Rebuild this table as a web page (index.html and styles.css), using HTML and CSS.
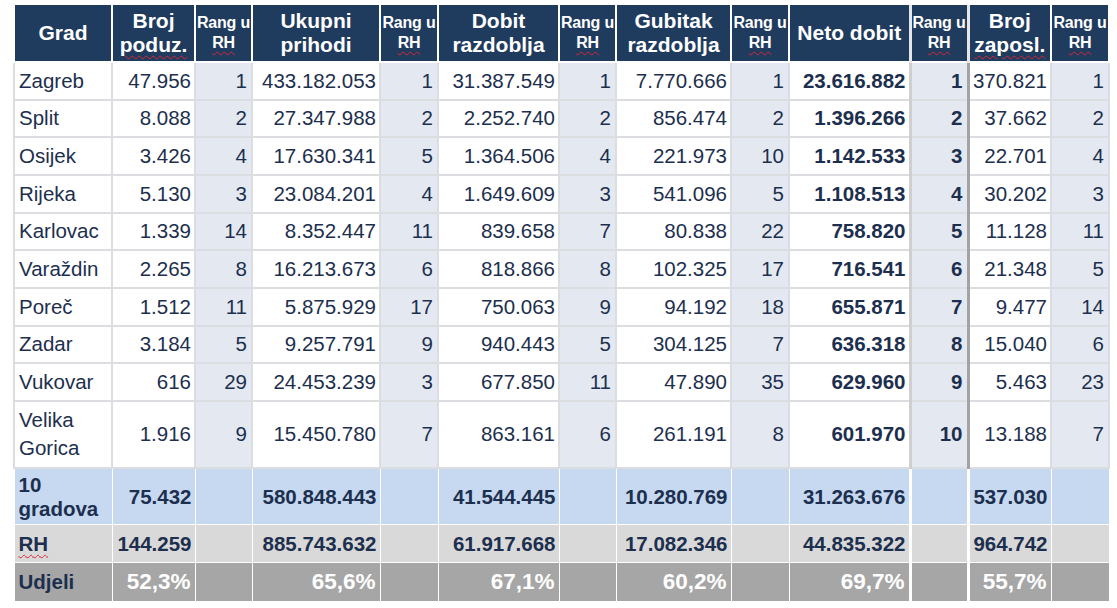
FILE: index.html
```html
<!DOCTYPE html>
<html lang="hr">
<head>
<meta charset="utf-8">
<title>Gradovi</title>
<link rel="stylesheet" href="styles.css">
</head>
<body>
<div class="wrap">
<table class="grid">
<colgroup>
<col style="width:98px"><col style="width:83px"><col style="width:57px">
<col style="width:128px"><col style="width:58px"><col style="width:121px">
<col style="width:57px"><col style="width:115px"><col style="width:58px">
<col style="width:121px"><col style="width:58px"><col style="width:83px">
<col style="width:58px">
</colgroup>
<thead>
<tr class="head">
<th>Grad</th>
<th>Broj<br><span class="sq">poduz.</span></th>
<th class="rh">Rang u<br><span class="sq">RH</span></th>
<th>Ukupni<br>prihodi</th>
<th class="rh">Rang u<br><span class="sq">RH</span></th>
<th>Dobit<br>razdoblja</th>
<th class="rh">Rang u<br><span class="sq">RH</span></th>
<th>Gubitak<br>razdoblja</th>
<th class="rh">Rang u<br><span class="sq">RH</span></th>
<th>Neto dobit</th>
<th class="rh sl">Rang u<br><span class="sq">RH</span></th>
<th class="sz">Broj<br><span class="sq">zaposl.</span></th>
<th class="rh">Rang u<br><span class="sq">RH</span></th>
</tr>
</thead>
<tbody>
<tr class="row"><td class="c">Zagreb</td><td class="n">47.956</td><td class="r">1</td><td class="n">433.182.053</td><td class="r">1</td><td class="n">31.387.549</td><td class="r">1</td><td class="n">7.770.666</td><td class="r">1</td><td class="n nb">23.616.882</td><td class="r b sl">1</td><td class="n sz">370.821</td><td class="r">1</td></tr>
<tr class="row"><td class="c">Split</td><td class="n">8.088</td><td class="r">2</td><td class="n">27.347.988</td><td class="r">2</td><td class="n">2.252.740</td><td class="r">2</td><td class="n">856.474</td><td class="r">2</td><td class="n nb">1.396.266</td><td class="r b sl">2</td><td class="n sz">37.662</td><td class="r">2</td></tr>
<tr class="row"><td class="c">Osijek</td><td class="n">3.426</td><td class="r">4</td><td class="n">17.630.341</td><td class="r">5</td><td class="n">1.364.506</td><td class="r">4</td><td class="n">221.973</td><td class="r">10</td><td class="n nb">1.142.533</td><td class="r b sl">3</td><td class="n sz">22.701</td><td class="r">4</td></tr>
<tr class="row"><td class="c">Rijeka</td><td class="n">5.130</td><td class="r">3</td><td class="n">23.084.201</td><td class="r">4</td><td class="n">1.649.609</td><td class="r">3</td><td class="n">541.096</td><td class="r">5</td><td class="n nb">1.108.513</td><td class="r b sl">4</td><td class="n sz">30.202</td><td class="r">3</td></tr>
<tr class="row"><td class="c">Karlovac</td><td class="n">1.339</td><td class="r">14</td><td class="n">8.352.447</td><td class="r">11</td><td class="n">839.658</td><td class="r">7</td><td class="n">80.838</td><td class="r">22</td><td class="n nb">758.820</td><td class="r b sl">5</td><td class="n sz">11.128</td><td class="r">11</td></tr>
<tr class="row"><td class="c">Varaždin</td><td class="n">2.265</td><td class="r">8</td><td class="n">16.213.673</td><td class="r">6</td><td class="n">818.866</td><td class="r">8</td><td class="n">102.325</td><td class="r">17</td><td class="n nb">716.541</td><td class="r b sl">6</td><td class="n sz">21.348</td><td class="r">5</td></tr>
<tr class="row"><td class="c">Poreč</td><td class="n">1.512</td><td class="r">11</td><td class="n">5.875.929</td><td class="r">17</td><td class="n">750.063</td><td class="r">9</td><td class="n">94.192</td><td class="r">18</td><td class="n nb">655.871</td><td class="r b sl">7</td><td class="n sz">9.477</td><td class="r">14</td></tr>
<tr class="row"><td class="c">Zadar</td><td class="n">3.184</td><td class="r">5</td><td class="n">9.257.791</td><td class="r">9</td><td class="n">940.443</td><td class="r">5</td><td class="n">304.125</td><td class="r">7</td><td class="n nb">636.318</td><td class="r b sl">8</td><td class="n sz">15.040</td><td class="r">6</td></tr>
<tr class="row"><td class="c">Vukovar</td><td class="n">616</td><td class="r">29</td><td class="n">24.453.239</td><td class="r">3</td><td class="n">677.850</td><td class="r">11</td><td class="n">47.890</td><td class="r">35</td><td class="n nb">629.960</td><td class="r b sl">9</td><td class="n sz">5.463</td><td class="r">23</td></tr>
<tr class="row tall"><td class="c two">Velika<br>Gorica</td><td class="n">1.916</td><td class="r">9</td><td class="n">15.450.780</td><td class="r">7</td><td class="n">863.161</td><td class="r">6</td><td class="n">261.191</td><td class="r">8</td><td class="n nb">601.970</td><td class="r b sl">10</td><td class="n sz">13.188</td><td class="r">7</td></tr>
</tbody>
<tfoot>
<tr class="sum"><td class="c lbl">10<br>gradova</td><td class="n">75.432</td><td></td><td class="n">580.848.443</td><td></td><td class="n">41.544.445</td><td></td><td class="n">10.280.769</td><td></td><td class="n">31.263.676</td><td class="sl"></td><td class="n sz">537.030</td><td></td></tr>
<tr class="hr"><td class="c lbl"><span class="sq">RH</span></td><td class="n">144.259</td><td></td><td class="n">885.743.632</td><td></td><td class="n">61.917.668</td><td></td><td class="n">17.082.346</td><td></td><td class="n">44.835.322</td><td class="sl"></td><td class="n sz">964.742</td><td></td></tr>
<tr class="share"><td class="c lbl">Udjeli</td><td class="n">52,3%</td><td></td><td class="n">65,6%</td><td></td><td class="n">67,1%</td><td></td><td class="n">60,2%</td><td></td><td class="n">69,7%</td><td class="sl"></td><td class="n sz">55,7%</td><td></td></tr>
</tfoot>
</table>
</div>
</body>
</html>
```

FILE: styles.css
```css
html, body {
  margin: 0;
  padding: 0;
  background: #ffffff;
}

.wrap {
  padding: 5px 0 0 13px;
}

.grid {
  border-collapse: collapse;
  table-layout: fixed;
  width: 1095px;
  font-family: "Liberation Sans", Arial, sans-serif;
  font-size: 20.5px;
  color: #1d2f4e;
}

.grid th,
.grid td {
  padding: 0;
  overflow: hidden;
  white-space: nowrap;
}

/* header */
.head {
  height: 57px;
}

.head th {
  background: #1f3b5e;
  color: #ffffff;
  font-weight: bold;
  font-size: 21px;
  line-height: 24px;
  text-align: center;
  vertical-align: middle;
  border: 2px solid #ffffff;
  border-top: 0;
}

.head th.rh {
  font-size: 16px;
  line-height: 20px;
  letter-spacing: -0.2px;
}

.head th.sl,
.head th.sz {
  border-left: 3px solid #e6e6e6;
}

.sq {
  text-decoration: underline wavy #d8263a;
  text-decoration-thickness: 1px;
  text-underline-offset: 3px;
}

/* data rows */
.row {
  height: 37.67px;
}

.row.tall {
  height: 67px;
}

.row td {
  background: #ffffff;
  border: 2px solid #dcdde0;
  vertical-align: middle;
}

.row td.r {
  background: #e4e9f1;
}

.c {
  text-align: left;
  padding-left: 4px !important;
}

.two {
  line-height: 28px;
}

.n,
.r {
  text-align: right;
  padding-right: 3px !important;
}

.r {
  padding-right: 4px !important;
}

.nb,
.b {
  font-weight: bold;
}

.row td.sl {
  border-left: 3px solid #cfcfcf;
}

.row td.sz {
  border-left: 3px solid #a3a3a3;
}

/* footer */
tfoot td {
  border: 1px solid #ffffff;
  font-weight: bold;
  vertical-align: middle;
}

tfoot td.sl,
tfoot td.sz {
  border-left: 3px solid #ffffff;
}

.sum {
  height: 57px;
}

.sum td {
  background: #c6d9f0;
  border-top: 2px solid #ffffff;
  line-height: 24px;
}

.hr {
  height: 38px;
}

.hr td {
  background: #d9d9d9;
}

.share {
  height: 39px;
}

.share td {
  background: #a6a6a6;
}

.share td.n {
  color: #ffffff;
  font-size: 22.5px;
  padding-right: 4px !important;
}
```
